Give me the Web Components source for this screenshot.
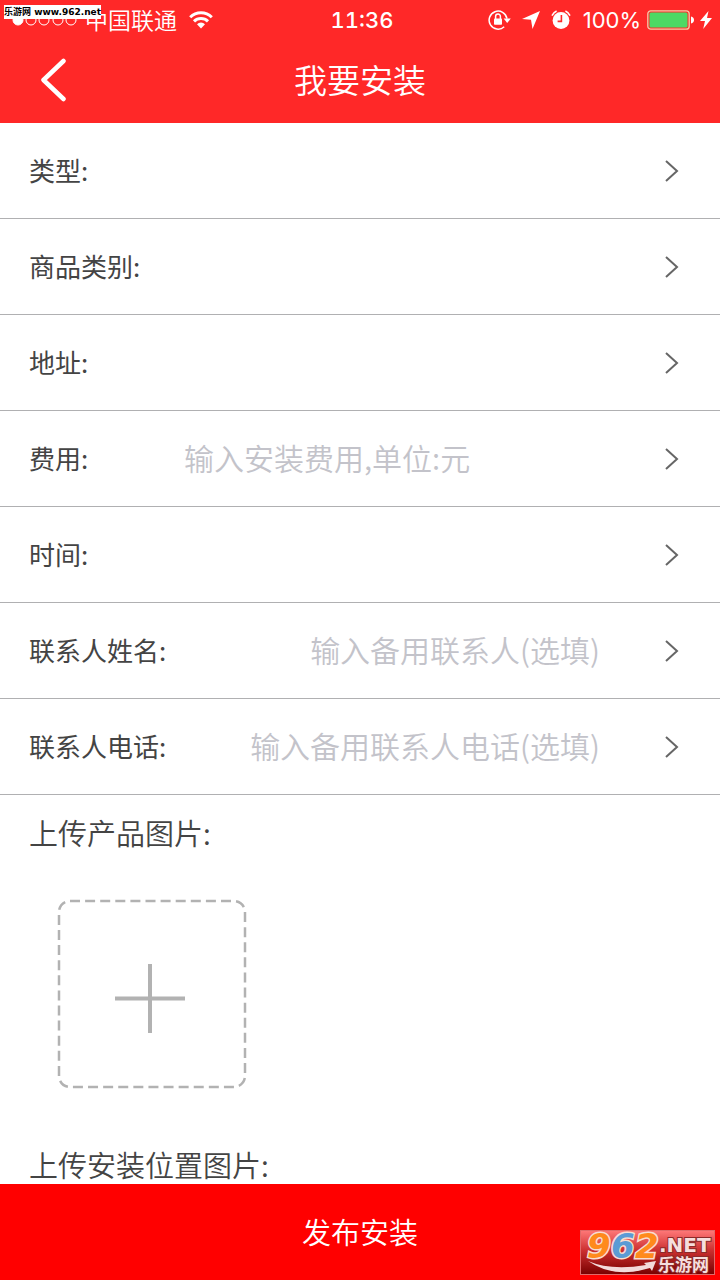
<!DOCTYPE html>
<html lang="zh-CN">
<head>
<meta charset="utf-8">
<meta name="viewport" content="width=device-width, initial-scale=1">
<title>我要安装</title>
<style>
body {
    margin: 0;
    background: #fff;
    color: #444;
    font-family: Inter, "Noto Sans CJK SC", sans-serif;
}
</style>
</head>
<body>
<install-page></install-page>

<script>
class BaseElement extends HTMLElement {
    constructor() {
        super();
        this.attachShadow({ mode: 'open' });
    }

    connectedCallback() {
        this.shadowRoot.innerHTML = this.template();
    }

    attr(name) {
        return this.getAttribute(name) || '';
    }
}

class StatusBar extends BaseElement {
    template() {
        return `
<style>
:host {
    display: grid;
    grid-template-columns: 1fr auto 1fr;
    align-items: center;
    height: 40px;
    padding: 0 8px 0 12px;
    color: #fff;
    font-size: 22px;
    line-height: 40px;
}
.left, .right, .icons { display: flex; align-items: center; }
.left, .icons { gap: 8px; }
.right { justify-content: flex-end; gap: 6px; }
.icons { padding-right: 5px; }
.carrier { font: 350 23px/38px "Noto Sans CJK SC", sans-serif; height: 40px; }
.time { font-weight: 500; font-variant-numeric: tabular-nums; }
svg { display: block; flex: none; }
</style>
<div class="left">
    <svg width="65" height="12" viewBox="0 0 65 12" fill="none" stroke="#fff">
        <circle cx="6" cy="6" r="5" fill="#fff"/>
        <circle cx="19" cy="6" r="5"/>
        <circle cx="32" cy="6" r="5"/>
        <circle cx="46" cy="6" r="5"/>
        <circle cx="59" cy="6" r="5"/>
    </svg>
    <span class="carrier">中国联通</span>
    <svg width="32" height="18" viewBox="0 0 32 18" fill="none" stroke="#fff" stroke-width="3">
        <path d="M5.2 6.200a15.400 15.400 0 0 1 21.600 0"/>
        <path d="M9 10.400a10 10 0 0 1 14 0"/>
        <path d="M12 13.200a5.800 5.800 0 0 1 8 0L16 17.400z" fill="#fff" stroke="none"/>
    </svg>
</div>
<span class="time">11:36</span>
<div class="right">
    <div class="icons">
        <svg width="24" height="22" viewBox="0 0 24 22" fill="none" stroke="#fff" stroke-width="1.500">
            <path d="M16.200 17.800A9 9 0 1 1 19 9.600"/>
            <path d="M15.600 9.600h7.200l-3.600 4.400z" fill="#fff" stroke="none"/>
            <path d="M7.600 10V7.400a2.400 2.400 0 0 1 4.800 0V10"/>
            <rect x="6" y="9.500" width="8" height="6.200" rx=".8" fill="#fff" stroke="none"/>
        </svg>
        <svg width="22" height="20" viewBox="0 0 22 20" fill="#fff">
            <path d="M20 1 12.500 19l-1.500-9.200L2 9z"/>
        </svg>
        <svg width="22" height="22" viewBox="0 0 22 22" fill="none" stroke="#fff" stroke-width="1.600">
            <circle cx="11" cy="11.500" r="8.400" fill="#fff" stroke="none"/>
            <path d="M2 6.600A9 9 0 0 1 6.600 2M15.400 2A9 9 0 0 1 20 6.600"/>
            <path d="M11.400 6v6.400H7.600" stroke="#ff2828"/>
        </svg>
    </div>
    <span>100%</span>
    <svg width="47" height="20" viewBox="0 0 47 20">
        <rect x=".8" y=".8" width="41.400" height="18.400" rx="3" fill="none" stroke="#f5c9a8" stroke-width="1.300"/>
        <rect x="2.500" y="2.500" width="38" height="15" rx="1.500" fill="#4cd964"/>
        <path d="M44 6.500q3 .6 3 3.500t-3 3.500z" fill="#fff"/>
    </svg>
    <svg width="12" height="18" viewBox="0 0 12 18" fill="#fff">
        <path d="M8.500 0 0 10h5L3.200 18 12 7H7z"/>
    </svg>
</div>`;
    }
}

class NavBar extends BaseElement {
    template() {
        return `
<style>
:host {
    display: grid;
    grid-template-columns: 96px 1fr 96px;
    align-items: start;
    height: 83px;
    color: #fff;
}
button {
    height: 80px;
    padding: 0 0 0 40px;
    border: 0;
    background: none;
    color: inherit;
}
svg { display: block; }
h1 {
    margin: 0;
    font: 350 33px/78px "Noto Sans CJK SC", sans-serif;
    text-align: center;
}
</style>
<button type="button" aria-label="返回">
    <svg width="28" height="44" viewBox="0 0 28 44" fill="none" stroke="currentColor" stroke-width="4.500" stroke-linecap="round" stroke-linejoin="round">
        <path d="M23.500 3 3.500 22 23.500 41"/>
    </svg>
</button>
<h1><slot></slot></h1>`;
    }
}

// A row of the form: a text box when it has a placeholder, otherwise a picker button.
class FormRow extends BaseElement {
    template() {
        const arrow = `
    <svg width="16" height="24" viewBox="0 0 16 24" fill="none" stroke="#666" stroke-width="2">
        <path d="M2 2 13 12 2 22"/>
    </svg>`;
        const content = this.hasAttribute('placeholder')
            ? `<div class="row">
    <label for="field">${this.attr('label')}</label>
    <input id="field" type="${this.attr('type') || 'text'}" placeholder="${this.attr('placeholder')}">${arrow}
</div>`
            : `<button class="row" type="button"><span class="label">${this.attr('label')}</span>${arrow}</button>`;
        return `
<style>
:host {
    display: block;
    border-bottom: 1px solid #b0b0b2;
}
.row {
    display: flex;
    align-items: center;
    box-sizing: border-box;
    width: 100%;
    height: 95px;
    padding: 0 40px 0 29px;
    border: 0;
    background: none;
    color: inherit;
    text-align: left;
}
label, .label {
    flex: none;
    min-width: 155px;
    padding-bottom: 2px;
    font: 400 26px/40px "Noto Sans CJK SC", sans-serif;
}
input {
    flex: 1;
    min-width: 0;
    height: 60px;
    margin-right: 64px;
    padding: 0 0 4px;
    border: 0;
    outline: 0;
    background: none;
    color: inherit;
    font: 350 30px/40px "Noto Sans CJK SC", sans-serif;
}
input::placeholder { color: #c3c3ca; opacity: 1; }
:host([align="right"]) input { text-align: right; }
svg { flex: none; margin-left: auto; }
</style>
${content}`;
    }
}

class PhotoUpload extends BaseElement {
    template() {
        return `
<style>
:host {
    display: block;
    padding: 20px 29px 0;
}
h2 {
    margin: 0;
    font: 350 29px/34px "Noto Sans CJK SC", sans-serif;
}
button {
    display: block;
    margin: 50px 28px 38px;
    padding: 0;
    border: 0;
    background: none;
}
svg { display: block; }
</style>
<h2><slot></slot></h2>
<button type="button" aria-label="添加图片">
    <svg width="190" height="190" viewBox="0 0 190 190" fill="none" stroke="#b2b2b2">
        <rect x="2" y="2" width="186" height="186" rx="11" stroke-width="2.500" stroke-dasharray="10 5.100"/>
        <path d="M93 65v69M58 99.500h70" stroke-width="4"/>
    </svg>
</button>`;
    }
}

class SubmitBar extends BaseElement {
    template() {
        return `
<style>
:host {
    display: block;
    position: relative;
    flex: none;
}
button {
    display: block;
    width: 100%;
    height: 96px;
    padding: 0 0 2px;
    border: 0;
    background: #f00;
    color: #fff;
    font: 350 29px/40px "Noto Sans CJK SC", sans-serif;
}
site-logo { position: absolute; right: 5px; bottom: 5px; }
</style>
<button type="submit"><slot></slot></button>
<site-logo></site-logo>`;
    }
}

class SiteLogo extends BaseElement {
    template() {
        return `
<style>
:host { display: block; }
svg { display: block; overflow: visible; }
.digits { font: italic 700 34px "DejaVu Sans", sans-serif; stroke-width: 3px; paint-order: stroke; }
.net { font: 700 20px "DejaVu Sans", sans-serif; }
.name { font: 700 17px "Noto Sans CJK SC", sans-serif; }
</style>
<svg width="135" height="45" viewBox="0 0 135 45">
    <defs>
        <linearGradient id="shade" x2="0" y2="1">
            <stop offset="0" stop-color="#ff7878"/>
            <stop offset=".45" stop-color="#cc3030"/>
            <stop offset="1" stop-color="#780000"/>
        </linearGradient>
    </defs>
    <rect x=".5" y=".5" width="134" height="44" fill="url(#shade)" stroke="#e06a6a"/>
    <g class="digits" stroke="#f8dcd0">
        <text x="7" y="28" fill="#ff8a1c">9</text>
        <text x="31" y="28" fill="#5b9bd5">6</text>
        <text x="55" y="28" fill="#ff8a1c">2</text>
    </g>
    <g fill="#f6dede" stroke="#8b2a2a" stroke-width="2" paint-order="stroke">
        <text class="net" x="79" y="22">.NET</text>
        <text class="name" x="78" y="41">乐游网</text>
    </g>
    <path d="M8 31q23 10 58 4l-2-2 12-2-4 10-2-3Q34 49 8 31z" fill="#f3dada"/>
</svg>`;
    }
}

class SiteTag extends BaseElement {
    template() {
        return `
<style>
:host {
    position: absolute;
    top: 5px;
    left: 4px;
    background: #fff;
    color: #000;
    font: 700 9px/14px "DejaVu Sans", "Noto Sans CJK SC", sans-serif;
    white-space: nowrap;
}
</style>
乐游网 www.962.net`;
    }
}

class InstallPage extends BaseElement {
    template() {
        return `
<style>
:host {
    display: flex;
    flex-direction: column;
    position: relative;
    height: 100vh;
}
header { flex: none; background: #ff2828; }
main {
    flex: 1;
    min-height: 0;
    overflow-y: auto;
    scrollbar-width: none;
}
</style>
<header>
    <status-bar></status-bar>
    <nav-bar>我要安装</nav-bar>
</header>
<main>
    <form-row label="类型:"></form-row>
    <form-row label="商品类别:"></form-row>
    <form-row label="地址:"></form-row>
    <form-row label="费用:" placeholder="输入安装费用,单位:元"></form-row>
    <form-row label="时间:"></form-row>
    <form-row label="联系人姓名:" placeholder="输入备用联系人(选填)" align="right"></form-row>
    <form-row label="联系人电话:" type="tel" placeholder="输入备用联系人电话(选填)" align="right"></form-row>
    <photo-upload>上传产品图片:</photo-upload>
    <photo-upload>上传安装位置图片:</photo-upload>
</main>
<submit-bar>发布安装</submit-bar>
<site-tag></site-tag>`;
    }
}

customElements.define('status-bar', StatusBar);
customElements.define('nav-bar', NavBar);
customElements.define('form-row', FormRow);
customElements.define('photo-upload', PhotoUpload);
customElements.define('submit-bar', SubmitBar);
customElements.define('site-logo', SiteLogo);
customElements.define('site-tag', SiteTag);
customElements.define('install-page', InstallPage);
</script>
</body>
</html>
